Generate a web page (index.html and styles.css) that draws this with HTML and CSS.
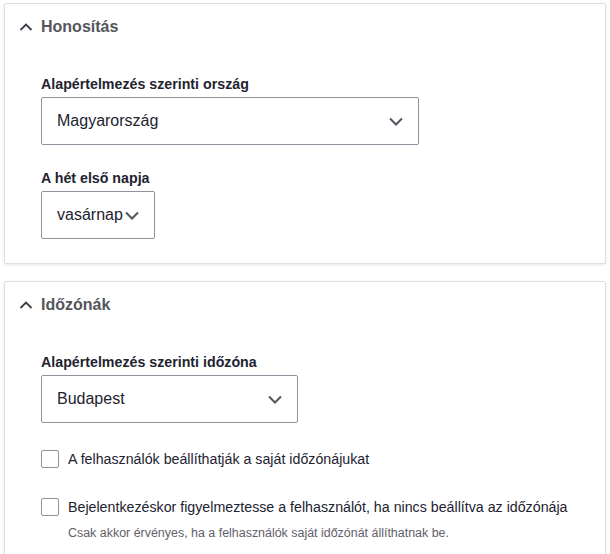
FILE: index.html
```html
<!DOCTYPE html>
<html lang="hu">
<head>
<meta charset="utf-8">
<link rel="stylesheet" href="styles.css">
</head>
<body>
<div class="page">
  <section class="card">
    <div class="summary">
      <svg class="chev" width="14" height="10" viewBox="0 0 14 10"><path d="M1.5 8 L7 2.5 L12.5 8" fill="none" stroke="#3b3c45" stroke-width="1.8"/></svg>
      <span class="title">Honosítás</span>
    </div>
    <div class="content">
      <div class="field">
        <label class="label">Alapértelmezés szerinti ország</label>
        <div class="select w-country"><span>Magyarország</span><svg class="arrow" width="14" height="9" viewBox="0 0 14 9"><path d="M1 1.5 L7 7.5 L13 1.5" fill="none" stroke="#545560" stroke-width="2"/></svg></div>
      </div>
      <div class="field">
        <label class="label">A hét első napja</label>
        <div class="select w-day"><span>vasárnap</span><svg class="arrow" width="14" height="9" viewBox="0 0 14 9"><path d="M1 1.5 L7 7.5 L13 1.5" fill="none" stroke="#545560" stroke-width="2"/></svg></div>
      </div>
    </div>
  </section>
  <section class="card">
    <div class="summary">
      <svg class="chev" width="14" height="10" viewBox="0 0 14 10"><path d="M1.5 8 L7 2.5 L12.5 8" fill="none" stroke="#3b3c45" stroke-width="1.8"/></svg>
      <span class="title">Időzónák</span>
    </div>
    <div class="content">
      <div class="field">
        <label class="label">Alapértelmezés szerinti időzóna</label>
        <div class="select w-tz"><span>Budapest</span><svg class="arrow" width="14" height="9" viewBox="0 0 14 9"><path d="M1 1.5 L7 7.5 L13 1.5" fill="none" stroke="#545560" stroke-width="2"/></svg></div>
      </div>
      <div class="check first">
        <span class="box"></span>
        <span class="ctext">A felhasználók beállíthatják a saját időzónájukat</span>
      </div>
      <div class="check">
        <span class="box"></span>
        <div>
          <span class="ctext">Bejelentkezéskor figyelmeztesse a felhasználót, ha nincs beállítva az időzónája</span>
          <div class="desc">Csak akkor érvényes, ha a felhasználók saját időzónát állíthatnak be.</div>
        </div>
      </div>
    </div>
  </section>
</div>
</body>
</html>
```
FILE: styles.css
```css
html, body {
  margin: 0;
  padding: 0;
  background: #ffffff;
}
body {
  font-family: "Liberation Sans", Arial, sans-serif;
  color: #222330;
}
.page {
  padding: 3px 4px 0 4px;
  display: flex;
  flex-direction: column;
  gap: 17px;
}
.card {
  border: 1px solid #dedfe4;
  border-radius: 2px;
  box-shadow: 0 1px 3px rgba(0, 0, 0, 0.1);
  background: #fff;
}
.summary {
  display: flex;
  align-items: center;
  height: 46px;
  padding-left: 14px;
}
.chev {
  display: block;
  margin-right: 8px;
}
.title {
  font-size: 16px;
  font-weight: bold;
  color: #55565b;
  line-height: 20px;
}
.content {
  padding: 25px 36px 24px 36px;
}
.field + .field {
  margin-top: 24px;
}
.label {
  display: block;
  font-size: 14.22px;
  font-weight: bold;
  line-height: 18px;
  margin-bottom: 4px;
}
.select {
  box-sizing: border-box;
  height: 48px;
  border: 1px solid #8e929c;
  border-radius: 2px;
  display: flex;
  align-items: center;
  justify-content: space-between;
  padding: 0 15px 0 15px;
  font-size: 16px;
}
.w-country { width: 378px; }
.w-day { width: 114px; padding-right: 15px; }
.w-tz { width: 257px; }
.check {
  display: flex;
  align-items: flex-start;
  gap: 9px;
  font-size: 14.22px;
  line-height: 18px;
}
.check.first {
  margin-top: 27px;
  margin-bottom: 30px;
}
.box {
  box-sizing: border-box;
  width: 18px;
  height: 18px;
  border: 1px solid #8e929c;
  border-radius: 2px;
  flex: none;
}
.desc {
  font-size: 12.45px;
  color: #5f606a;
  margin-top: 9px;
  line-height: 16px;
}
```
